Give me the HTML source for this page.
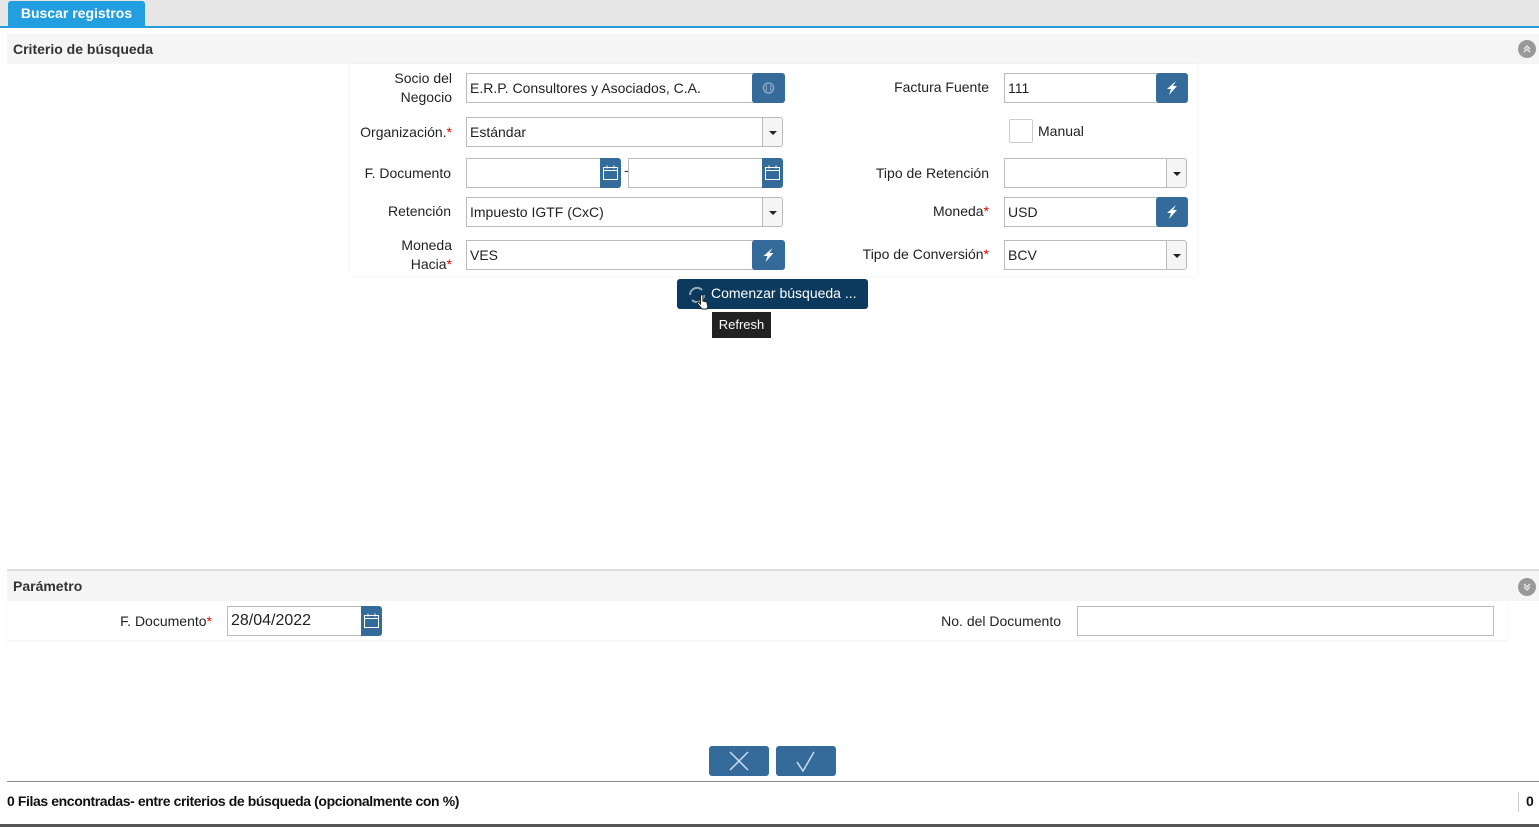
<!DOCTYPE html>
<html><head><meta charset="utf-8"><style>
body{margin:0;width:1539px;height:827px;position:relative;overflow:hidden;background:#fff;font-family:"Liberation Sans","DejaVu Sans",sans-serif;font-size:14px;color:#333}
.a{position:absolute}
.lbl{position:absolute;text-align:right;line-height:19px;color:#222}
.req{color:#e00}
.in{position:absolute;border:1px solid #bbb;background:#fff;line-height:28px;padding-left:3px;box-sizing:border-box;height:30px;color:#222}
.bt{position:absolute;background:#356b9a;border-radius:3px;height:30px;box-sizing:border-box}
.dd{position:absolute;height:30px;width:21px;box-sizing:border-box;border:1px solid #bbb;background:#f5f5f5;border-radius:0 3px 3px 0}
.dd:after{content:"";position:absolute;left:6px;top:13px;border-left:4px solid transparent;border-right:4px solid transparent;border-top:4px solid #222}
.hdr{position:absolute;left:7px;right:0;height:30px;background:#f5f5f5;font-weight:bold;line-height:30px;padding-left:6px;color:#333}
.circ{position:absolute;width:18px;height:18px;border-radius:50%;background:#999}
</style></head><body>
<div class="a" style="left:0;top:0;width:1539px;height:26px;background:#e6e6e6"></div>
<div class="a" style="left:0;top:26px;width:1539px;height:2px;background:#239fdf"></div>
<div class="a" style="left:8px;top:1px;width:137px;height:26px;background:#239fdf;border-radius:3px 3px 0 0;color:#fff;font-weight:bold;line-height:24px;text-align:center">Buscar registros</div>

<div class="hdr" style="top:34px">Criterio de búsqueda</div>
<svg class="circ" style="left:1518px;top:40px" width="18" height="18"><path d="M6 9l3-3 3 3M6 12l3-3 3 3" fill="none" stroke="#eee" stroke-width="1.3"/></svg>
<div class="a" style="left:350px;top:64px;width:847px;height:212px;box-shadow:0 0 3px #eee"></div>

<div class="lbl" style="left:360px;width:92px;top:69px">Socio del<br>Negocio</div>
<div class="in" style="left:466px;top:73px;width:290px">E.R.P. Consultores y Asociados, C.A.</div>
<div class="bt" style="left:752px;top:73px;width:33px"><svg width="33" height="30"><circle cx="16.5" cy="15" r="5" fill="none" stroke="#8aa9c6" stroke-width="1.5"/><path d="M14.5 12v6M18.5 12v6" stroke="#8aa9c6"/></svg></div>
<div class="lbl" style="left:800px;width:189px;top:78px">Factura Fuente</div>
<div class="in" style="left:1004px;top:73px;width:155px">111</div>
<div class="bt" style="left:1156px;top:73px;width:32px"><svg width="32" height="30"><path d="M20 8 L11 16 L15 16 L13 22 L21 13 L17 13 Z" fill="#fff"/></svg></div>

<div class="lbl" style="left:340px;width:112px;top:123px">Organización.<span class="req">*</span></div>
<div class="in" style="left:466px;top:117px;width:300px">Estándar</div>
<div class="dd" style="left:762px;top:117px"></div>
<div class="a" style="left:1009px;top:119px;width:24px;height:24px;border:1px solid #ccc;box-sizing:border-box;border-radius:2px"></div>
<div class="a" style="left:1038px;top:123px;color:#222">Manual</div>

<div class="lbl" style="left:340px;width:111px;top:164px">F. Documento</div>
<div class="in" style="left:466px;top:158px;width:136px"></div>
<div class="bt" style="left:600px;top:158px;width:21px;border-radius:0 3px 3px 0"><svg width="21" height="30"><rect x="3.5" y="9.5" width="14" height="12" fill="none" stroke="#fff"/><path d="M3.5 12.5h14M7 7.5v3M14 7.5v3" stroke="#fff"/></svg></div>
<div class="a" style="left:624px;top:162px">-</div>
<div class="in" style="left:628px;top:158px;width:136px"></div>
<div class="bt" style="left:762px;top:158px;width:21px;border-radius:0 3px 3px 0"><svg width="21" height="30"><rect x="3.5" y="9.5" width="14" height="12" fill="none" stroke="#fff"/><path d="M3.5 12.5h14M7 7.5v3M14 7.5v3" stroke="#fff"/></svg></div>
<div class="lbl" style="left:800px;width:189px;top:164px">Tipo de Retención</div>
<div class="in" style="left:1004px;top:158px;width:165px"></div>
<div class="dd" style="left:1166px;top:158px"></div>

<div class="lbl" style="left:340px;width:111px;top:202px">Retención</div>
<div class="in" style="left:466px;top:197px;width:300px">Impuesto IGTF (CxC)</div>
<div class="dd" style="left:762px;top:197px"></div>
<div class="lbl" style="left:800px;width:189px;top:202px">Moneda<span class="req">*</span></div>
<div class="in" style="left:1004px;top:197px;width:155px">USD</div>
<div class="bt" style="left:1156px;top:197px;width:32px"><svg width="32" height="30"><path d="M20 8 L11 16 L15 16 L13 22 L21 13 L17 13 Z" fill="#fff"/></svg></div>

<div class="lbl" style="left:340px;width:112px;top:236px">Moneda<br>Hacia<span class="req">*</span></div>
<div class="in" style="left:466px;top:240px;width:290px">VES</div>
<div class="bt" style="left:752px;top:240px;width:33px"><svg width="33" height="30"><path d="M20.5 8 L11.5 16 L15.5 16 L13.5 22 L21.5 13 L17.5 13 Z" fill="#fff"/></svg></div>
<div class="lbl" style="left:800px;width:189px;top:245px">Tipo de Conversión<span class="req">*</span></div>
<div class="in" style="left:1004px;top:240px;width:165px">BCV</div>
<div class="dd" style="left:1166px;top:240px"></div>

<div class="a" style="left:677px;top:279px;width:191px;height:30px;background:#0b3a5e;border-radius:3px;color:#fff;line-height:28px"><svg class="a" style="left:9px;top:4px" width="26" height="28"><path d="M4 12a7 7 0 0 1 12-5M18 12a7 7 0 0 1-12 5" fill="none" stroke="#9ab" stroke-width="2"/><path d="M16 26l-5-6 1.5-1 2 2v-8a1.2 1.2 0 0 1 2.4 0v5l4 1 1 5-1 2z" fill="#fff" stroke="#222"/></svg><span class="a" style="left:34px;top:0">Comenzar búsqueda ...</span></div>
<div class="a" style="left:712px;top:312px;width:59px;height:26px;background:#222;color:#fff;font-size:13px;line-height:26px;text-align:center">Refresh</div>

<div class="a" style="left:7px;top:569px;right:0;height:2px;background:#ddd"></div>
<div class="hdr" style="top:571px">Parámetro</div>
<svg class="circ" style="left:1518px;top:578px" width="18" height="18"><path d="M6 6l3 3 3-3M6 9l3 3 3-3" fill="none" stroke="#eee" stroke-width="1.3"/></svg>
<div class="a" style="left:7px;top:601px;width:1500px;height:39px;box-shadow:0 1px 2px #eee"></div>
<div class="lbl" style="left:60px;width:152px;top:612px">F. Documento<span class="req">*</span></div>
<div class="in" style="left:227px;top:606px;width:136px;font-size:16px">28/04/2022</div>
<div class="bt" style="left:361px;top:606px;width:21px;border-radius:0 3px 3px 0"><svg width="21" height="30"><rect x="3.5" y="9.5" width="14" height="12" fill="none" stroke="#fff"/><path d="M3.5 12.5h14M7 7.5v3M14 7.5v3" stroke="#fff"/></svg></div>
<div class="lbl" style="left:860px;width:201px;top:612px">No. del Documento</div>
<div class="in" style="left:1077px;top:606px;width:417px"></div>

<div class="bt" style="left:709px;top:746px;width:60px"><svg width="60" height="30"><path d="M21 6l18 18M39 6l-18 18" stroke="#cde" stroke-width="1.5"/></svg></div>
<div class="bt" style="left:776px;top:746px;width:60px"><svg width="60" height="30"><path d="M21 16l6 9 11-19" fill="none" stroke="#cde" stroke-width="1.5"/></svg></div>
<div class="a" style="left:7px;top:781px;right:0;height:1px;background:#888"></div>
<div class="a" style="left:7px;top:793px;font-weight:bold;font-size:14px;letter-spacing:-0.4px;color:#111">0 Filas encontradas- entre criterios de búsqueda (opcionalmente con %)</div>
<div class="a" style="left:1518px;top:792px;width:1px;height:20px;background:#ccc"></div>
<div class="a" style="left:1526px;top:793px;font-weight:bold;color:#111">0</div>
<div class="a" style="left:0;top:824px;width:1539px;height:3px;background:#555"></div>
</body></html>
